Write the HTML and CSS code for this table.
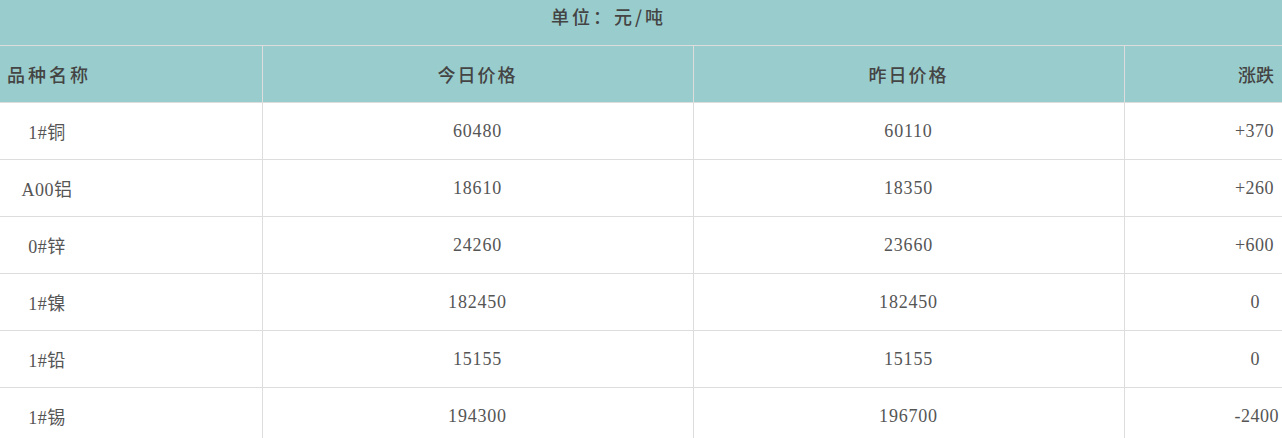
FILE: index.html
```html
<!DOCTYPE html>
<html lang="zh-CN">
<head>
<meta charset="utf-8">
<title>价格表</title>
<link rel="stylesheet" href="styles.css">
</head>
<body>
<table class="price-table">
  <colgroup>
    <col class="c-name">
    <col class="c-today">
    <col class="c-yest">
    <col class="c-chg">
  </colgroup>
  <thead>
    <tr class="title-row">
      <th colspan="4"><span class="unit">单位：元/吨</span></th>
    </tr>
    <tr class="head-row">
      <th class="name">品种名称</th>
      <th class="mid">今日价格</th>
      <th class="mid">昨日价格</th>
      <th class="chg">涨跌</th>
    </tr>
  </thead>
  <tbody>
    <tr><td class="name"><span>1#铜</span></td><td class="mid">60480</td><td class="mid">60110</td><td class="chg">+370</td></tr>
    <tr><td class="name"><span>A00铝</span></td><td class="mid">18610</td><td class="mid">18350</td><td class="chg">+260</td></tr>
    <tr><td class="name"><span>0#锌</span></td><td class="mid">24260</td><td class="mid">23660</td><td class="chg">+600</td></tr>
    <tr><td class="name"><span>1#镍</span></td><td class="mid">182450</td><td class="mid">182450</td><td class="chg zero">0</td></tr>
    <tr><td class="name"><span>1#铅</span></td><td class="mid">15155</td><td class="mid">15155</td><td class="chg zero">0</td></tr>
    <tr><td class="name"><span>1#锡</span></td><td class="mid">194300</td><td class="mid">196700</td><td class="chg neg">-2400</td></tr>
  </tbody>
</table>
</body>
</html>
```
FILE: styles.css
```css
html, body {
  margin: 0;
  padding: 0;
  background: #ffffff;
}

.price-table {
  width: 1282px;
  border-collapse: collapse;
  table-layout: fixed;
  font-family: "Liberation Serif", "Noto Sans CJK SC", serif;
  font-size: 18px;
  color: #555555;
}

.c-name { width: 262px; }
.c-today { width: 431px; }
.c-yest { width: 431px; }
.c-chg { width: 158px; }

.price-table th {
  background: #99cccc;
  color: #444444;
  font-family: "Noto Sans CJK SC", sans-serif;
  font-weight: 500;
  font-size: 18px;
  letter-spacing: 2px;
  padding: 0;
  border: 1px solid #dddddd;
}

.title-row th {
  height: 45px;
  border-top: none;
  border-left: none;
  border-right: none;
  text-align: left;
  vertical-align: top;
}

.unit {
  display: block;
  padding: 3px 0 0 551px;
  line-height: 26px;
  letter-spacing: 3px;
}

.head-row th {
  height: 56px;
  vertical-align: middle;
}

.price-table td {
  height: 56px;
  padding: 0;
  border: 1px solid #dddddd;
  vertical-align: middle;
}

.price-table tr > :first-child { border-left: none; }
.price-table tr > :last-child { border-right: none; }

th.name {
  text-align: left;
  padding-left: 7px;
  letter-spacing: 3px;
}

td.name {
  text-align: left;
  padding-left: 7px;
}

td.name span {
  display: inline-block;
  width: 80px;
  text-align: center;
  letter-spacing: 0.5px;
}

.mid {
  text-align: center;
}

td.mid {
  letter-spacing: 0.8px;
}

th.chg {
  text-align: right;
  padding-right: 8px;
  letter-spacing: 0;
}

td.chg {
  text-align: right;
  padding-right: 8px;
  letter-spacing: 0.5px;
}

td.chg.zero {
  padding-right: 22px;
}

td.chg.neg {
  padding-right: 3px;
}
```
